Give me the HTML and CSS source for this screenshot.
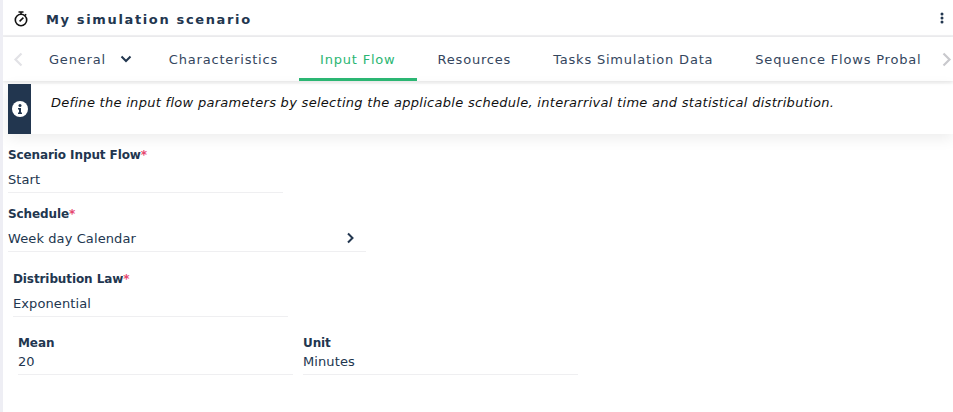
FILE: index.html
```html
<!DOCTYPE html>
<html lang="en">
<head>
    <meta charset="UTF-8">
    <meta name="viewport" content="width=device-width, initial-scale=1.0">
    <title>My simulation scenario</title>
    <link rel="stylesheet" href="styles.css">
</head>
<body>
    <div class="page">
        <!-- Title bar -->
        <header class="title-bar">
            <svg class="timer-icon" width="16" height="16" viewBox="0 0 16 16">
                <path d="M5.5 1h5M8 1v2M12 3.2l1.2 1.2" fill="none" stroke="#111" stroke-width="1.5"/>
                <circle cx="8" cy="9" r="5.7" fill="none" stroke="#111" stroke-width="1.6"/>
                <path d="M6.6 10.4L10.4 6.6" stroke="#111" stroke-width="1.5"/>
            </svg>
            <h1>My simulation scenario</h1>
            <svg class="more-icon" width="4" height="12" viewBox="0 0 4 12">
                <circle cx="2" cy="2" r="1.5"/>
                <circle cx="2" cy="6" r="1.5"/>
                <circle cx="2" cy="10" r="1.5"/>
            </svg>
        </header>

        <!-- Tabs -->
        <nav class="tabs">
            <svg class="tab-arrow arrow-off" width="10" height="15" viewBox="0 0 10 15"><path d="M8.5 1.5L2.5 7.5L8.5 13.5" /></svg>
            <div class="tab-list">
                <a class="tab tab-general">General
                    <svg width="12" height="8" viewBox="0 0 12 8"><path d="M1.5 1.5L6 6L10.5 1.5"/></svg>
                </a>
                <a class="tab">Characteristics</a>
                <a class="tab active">Input Flow</a>
                <a class="tab">Resources</a>
                <a class="tab">Tasks Simulation Data</a>
                <a class="tab">Sequence Flows Probal</a>
            </div>
            <svg class="tab-arrow" width="10" height="15" viewBox="0 0 10 15"><path d="M1.5 1.5L7.5 7.5L1.5 13.5" /></svg>
        </nav>

        <!-- Info notice -->
        <div class="notice">
            <div class="notice-side">
                <svg width="16" height="16" viewBox="0 0 16 16">
                    <circle cx="8" cy="8" r="8" fill="#fff"/>
                    <circle cx="8" cy="4.4" r="1.5" fill="#22364f"/>
                    <path d="M6 7h3v4.6h1V13H6v-1.4h1V8.4H6z" fill="#22364f"/>
                </svg>
            </div>
            <p>Define the input flow parameters by selecting the applicable schedule, interarrival time and statistical distribution.</p>
        </div>

        <!-- Form -->
        <div class="form">
            <div class="field field-start">
                <label>Scenario Input Flow<span class="req">*</span></label>
                <div class="value">Start</div>
            </div>
            <div class="field field-schedule">
                <label>Schedule<span class="req">*</span></label>
                <div class="value">Week day Calendar
                    <svg width="9" height="12" viewBox="0 0 9 12"><path d="M2 1.5L6.5 6L2 10.5"/></svg>
                </div>
            </div>
            <div class="distribution">
                <div class="field field-law">
                    <label>Distribution Law<span class="req">*</span></label>
                    <div class="value">Exponential</div>
                </div>
                <div class="law-params">
                    <div class="param">
                        <label>Mean</label>
                        <div class="value">20</div>
                    </div>
                    <div class="param">
                        <label>Unit</label>
                        <div class="value">Minutes</div>
                    </div>
                </div>
            </div>
        </div>
    </div>
</body>
</html>
```

FILE: styles.css
```css
/* General reset */
* {
    box-sizing: border-box;
}

body {
    margin: 0;
    padding: 0;
    font-family: 'DejaVu Sans', sans-serif;
    font-size: 13px;
    color: #22364f;
    background-color: #fff;
}

.page {
    height: 412px;
    width: 953px;
    overflow: hidden;
    border-left: 3px solid #eeeef4;
}

/* Title bar */
.title-bar {
    display: flex;
    align-items: center;
    height: 37px;
    padding: 2px 9px 0 10px;
    border-bottom: 2px solid #f1f1f3;
}

.timer-icon {
    flex: none;
}

.title-bar h1 {
    flex: 1;
    margin: 0 0 0 17px;
    padding-top: 2px;
    font-size: 13px;
    font-weight: bold;
    letter-spacing: 1.64px;
}

.more-icon {
    fill: #22364f;
    margin-bottom: 2px;
}

/* Tabs */
.tabs {
    display: flex;
    align-items: center;
    height: 44px;
    padding: 0 5px 0 10px;
    box-shadow: 0 1px 4px rgba(0, 0, 0, 0.12);
}

.tab-arrow {
    flex: none;
    fill: none;
    stroke: #c9c9cd;
    stroke-width: 2.2;
}

.arrow-off {
    stroke: #e2e2e6;
}

.tab-list {
    flex: 1;
    display: flex;
    height: 44px;
    margin-left: 5px;
}

.tab {
    flex: none;
    display: flex;
    align-items: center;
    gap: 14px;
    height: 44px;
    padding: 0 21px;
    letter-spacing: 0.8px;
    white-space: nowrap;
    color: #34465e;
}

.tab-general {
    padding-right: 16px;
}

.tab svg {
    fill: none;
    stroke: #22364f;
    stroke-width: 2;
}

.tab.active {
    color: #2bb673;
    border-bottom: 3px solid #2bb673;
    padding-top: 3px;
}

/* Info notice */
.notice {
    display: flex;
    height: 50px;
    margin: 3px 0 0 5px;
    box-shadow: 0 4px 14px rgba(0, 0, 0, 0.08);
}

.notice-side {
    flex: none;
    display: flex;
    align-items: center;
    justify-content: center;
    width: 23px;
    background-color: #22364f;
}

.notice p {
    margin: 11px 0 0 20px;
    font-size: 13px;
    font-style: italic;
    letter-spacing: 0.29px;
    color: #111;
}

/* Form */
.form {
    padding: 12px 0 0 5px;
}

label {
    display: block;
    font-weight: bold;
    font-size: 12px;
    letter-spacing: -0.1px;
    line-height: 18px;
}

.req {
    color: #e5476f;
}

.value {
    display: flex;
    align-items: center;
    justify-content: space-between;
    font-size: 13px;
    letter-spacing: 0.1px;
    border-bottom: 1px solid #efeff1;
}

.field-start {
    width: 275px;
}

.field-start .value {
    height: 29px;
    padding-top: 2px;
}

.field-schedule {
    width: 358px;
    margin-top: 12px;
}

.field-schedule .value {
    height: 29px;
    padding: 2px 11px 0 0;
}

.field-schedule svg {
    fill: none;
    stroke: #22364f;
    stroke-width: 2;
}

.distribution {
    margin: 18px 0 0 5px;
}

.field-law {
    width: 275px;
}

.field-law .value {
    height: 29px;
    padding-top: 2px;
}

.law-params {
    display: flex;
    gap: 10px;
    margin: 17px 0 0 5px;
}

.param {
    width: 275px;
}

.param .value {
    height: 23px;
    padding-bottom: 3px;
}
```
